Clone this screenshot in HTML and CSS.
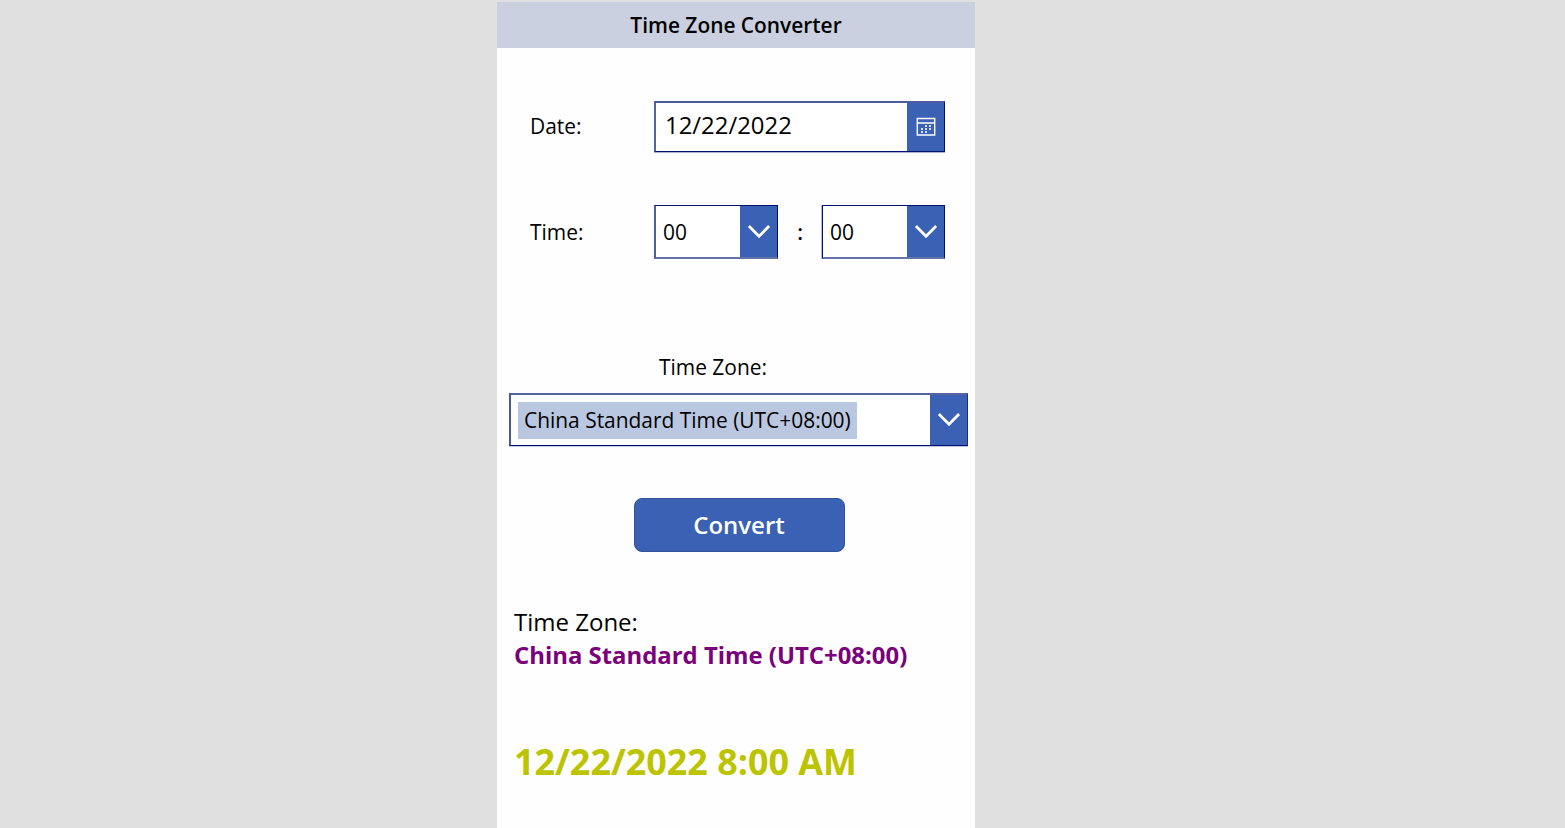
FILE: index.html
```html
<!DOCTYPE html>
<html lang="en">
<head>
<meta charset="utf-8">
<title>Time Zone Converter</title>
<link rel="stylesheet" href="styles.css">
</head>
<body>
<main class="app">
  <header class="title">Time Zone Converter</header>
  <div class="row date-row">
    <span class="label">Date:</span>
    <div class="field date-field">
      <span class="value date-value">12/22/2022</span>
      <span class="trigger"><svg class="calendar" width="20" height="20" viewBox="0 0 20 20"><path d="M1.3 1.5h17.4v16.5H1.3z M1 6h18" fill="none" stroke="#fff" stroke-width="1.4"/><path d="M9 8h2v2H9z M13 8h2v2h-2z M5 11h2v2H5z M9 11h2v2H9z M13 11h2v2h-2z M5 14h2v2H5z M9 14h2v2H9z" fill="#d5def0"/></svg></span>
    </div>
  </div>
  <div class="row time-row">
    <span class="label">Time:</span>
    <div class="field time-field">
      <span class="value">00</span>
      <span class="trigger"><svg class="chevron" width="24" height="16" viewBox="0 0 24 16"><path d="M1.9 2 12 12.2 22.1 2" fill="none" stroke="#fff" stroke-width="2.8"/></svg></span>
    </div>
    <span class="colon">:</span>
    <div class="field time-field minute-field">
      <span class="value">00</span>
      <span class="trigger"><svg class="chevron" width="24" height="16" viewBox="0 0 24 16"><path d="M1.9 2 12 12.2 22.1 2" fill="none" stroke="#fff" stroke-width="2.8"/></svg></span>
    </div>
  </div>
  <div class="zone-label">Time Zone:</div>
  <div class="field zone-field">
    <span class="tag">China Standard Time (UTC+08:00)</span>
    <span class="trigger"><svg class="chevron" width="24" height="16" viewBox="0 0 24 16"><path d="M1.9 2 12 12.2 22.1 2" fill="none" stroke="#fff" stroke-width="2.8"/></svg></span>
  </div>
  <button class="convert">Convert</button>
  <section class="result">
    <div class="result-label">Time Zone:</div>
    <div class="result-zone">China Standard Time (UTC+08:00)</div>
    <div class="result-time">12/22/2022 8:00 AM</div>
  </section>
</main>
</body>
</html>
```
FILE: styles.css
```css
* { box-sizing: border-box; }
body {
  margin: 0;
  height: 828px;
  overflow: hidden;
  background: #e0e0e0;
  color: #000;
  font-family: "Open Sans", sans-serif;
  font-size: 20.93px;
}
.app {
  width: 478px;
  height: 826px;
  margin: 2px 0 0 497px;
  background: #fefefe;
  display: flex;
  flex-direction: column;
}
.title {
  height: 46px;
  line-height: 46px;
  background: #cad0e0;
  text-align: center;
  font-size: 20.9px;
  font-weight: 600;
}
.row {
  display: flex;
  align-items: center;
  padding-left: 33px;
}
.date-row { margin-top: 53px; }
.time-row { margin-top: 53px; }
.label { width: 124px; }
.date-row .label { margin-top: -2px; }
.field {
  display: flex;
  border-style: solid;
  background: #fff;
}
.date-field {
  width: 291px;
  height: 51px;
  border-width: 2px 1px 1px 2px;
  border-color: #4b5b9d #001170 #001170 #4c66ad;
  box-shadow: 0 1px #aab2d2;
}
.time-field {
  width: 124px;
  height: 54px;
  border-width: 1px 1px 2px 2px;
  border-color: #001170 #001170 #6573aa #4c5fa5;
}
.minute-field {
  width: 123px;
  border-left: 1px solid #001170;
  box-shadow: -1px 0 #b4bbd7;
}
.zone-field {
  width: 459px;
  height: 53px;
  margin: 11px 0 0 12px;
  justify-content: space-between;
  border-width: 2px 1px 1px 2px;
  border-color: #5563a1 #1c2e7e #001170 #4456a0;
  box-shadow: 0 1px #c0c7df;
}
.value {
  flex: 1;
  padding-left: 7px;
  line-height: 52px;
}
.date-value {
  padding-left: 9px;
  line-height: 44px;
  font-size: 23.9px;
}
.trigger {
  width: 37px;
  display: flex;
  align-items: center;
  justify-content: center;
  background: #3a61b3;
}
.chevron { display: block; }
.colon {
  width: 44px;
  text-align: center;
  font-weight: 600;
}
.zone-label {
  height: 30px;
  margin: 93px 0 0 162px;
  line-height: 30px;
}
.tag {
  height: 37px;
  margin: 7px 0 0 7px;
  padding: 0 6px;
  line-height: 36px;
  background: #bac7e1;
}
.convert {
  width: 211px;
  height: 54px;
  margin: 52px 0 0 136.5px;
  padding: 0;
  border: 1px solid #30539c;
  border-radius: 8px;
  background: #3a61b3;
  color: #fff;
  font: 600 24px/50px "Open Sans", sans-serif;
}
.result {
  margin: 53px 0 0 17px;
  white-space: nowrap;
}
.result-label {
  font-size: 24px;
  line-height: 33px;
}
.result-zone {
  font-size: 23.9px;
  line-height: 33px;
  font-weight: 700;
  color: #7b007b;
}
.result-time {
  margin-top: 66px;
  font-size: 35.9px;
  line-height: 50px;
  font-weight: 700;
  color: #bcc400;
}
```
